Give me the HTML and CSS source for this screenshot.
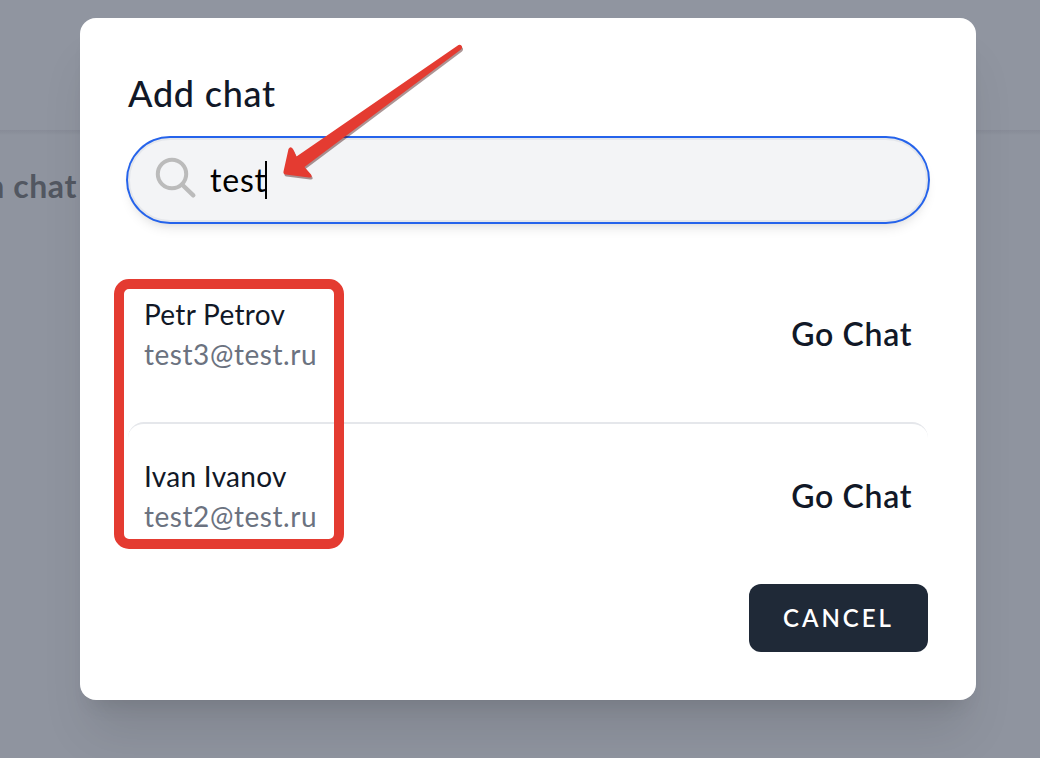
FILE: index.html
```html
<!DOCTYPE html>
<html lang="en">
<head>
<meta charset="utf-8">
<title>Add chat</title>
<link rel="stylesheet" href="styles.css">
</head>
<body>
<div class="page">
  <header class="page-header"></header>
  <main class="page-main"><span class="page-hint">n chat</span></main>
</div>
<div class="overlay">
  <section class="modal">
    <h1 class="title">Add chat</h1>
    <div class="search">
      <svg class="search-icon" viewBox="0 0 42 42" fill="none" stroke="#bbbbbb" stroke-width="4" stroke-linecap="round">
        <circle cx="18" cy="15" r="14.2"/>
        <path d="M28 25.500L39.300 36.300" stroke-width="4.400"/>
      </svg>
      <span class="query">test</span><span class="caret"></span>
    </div>
    <ul class="results">
      <li class="row first">
        <div class="person"><span class="name">Petr Petrov</span><span class="email">test3@test.ru</span></div>
        <span class="go">Go Chat</span>
      </li>
      <li class="row">
        <div class="person"><span class="name">Ivan Ivanov</span><span class="email">test2@test.ru</span></div>
        <span class="go">Go Chat</span>
      </li>
    </ul>
    <div class="actions"><button class="cancel">CANCEL</button></div>
  </section>
</div>
<div class="highlight"></div>
<svg class="arrow" viewBox="0 0 1040 758">
  <path d="M458.5 45Q461 44 462 46.500Q462.500 48 461 49.500L304.500 167L311 174.500Q313 178 309 177.500L285.500 174.500Q283 174 283.500 171.500L288.500 149Q290.500 145.500 293 149L296.500 156.500Z" fill="#e43b31"/>
</svg>
</body>
</html>
```

FILE: styles.css
```css
* { box-sizing: border-box; }
body {
  margin: 0;
  width: 1040px;
  height: 758px;
  overflow: hidden;
  font-family: Lato, "Open Sans", sans-serif;
  color: #111827;
  background: #8f949f;
}
.page-header { height: 130px; background: #9095a0; }
.page-main {
  height: 628px;
  background: linear-gradient(#888c98, #8b909b 3px, #8f949f 5px);
  padding-top: 36px;
}
.page-hint {
  display: flex;
  justify-content: flex-end;
  width: 77px;
  white-space: nowrap;
  font-size: 32px;
  line-height: 40px;
  font-weight: 700;
  letter-spacing: 0.6px;
  color: #525761;
}
.overlay {
  position: absolute;
  inset: 0;
  padding: 18px 64px 58px 80px;
}
.modal {
  width: 896px;
  height: 682px;
  padding: 48px;
  border-radius: 16px;
  background: #fff;
  box-shadow: 0 40px 50px -10px rgba(0,0,0,.1), 0 16px 20px -12px rgba(0,0,0,.1);
}
.title {
  margin: 0 0 18px;
  height: 54px;
  font-size: 36px;
  line-height: 54px;
  font-weight: 500;
  letter-spacing: 0.75px;
}
.search {
  height: 84px;
  display: flex;
  align-items: center;
  padding-left: 24px;
  border: 2px solid #e5e7eb;
  border-radius: 42px;
  background: #f3f4f6;
  box-shadow: 0 0 0 2px #2563eb, 0 8px 12px -2px rgba(0,0,0,.1), 0 4px 8px -4px rgba(0,0,0,.1);
}
.search-icon { width: 42px; height: 42px; margin-right: 14px; overflow: visible; }
.query { font-size: 32px; line-height: 48px; letter-spacing: 0.8px; color: #000; }
.caret { width: 2px; height: 38px; background: #000; margin-left: -1.5px; }
.results { list-style: none; margin: 38px 0 0; padding: 0; }
.row {
  height: 162px;
  display: flex;
  justify-content: space-between;
  align-items: flex-start;
  padding: 32px 16px 48px;
  border-top: 2px solid #e5e7eb;
  border-radius: 16px;
}
.row.first { border-top-color: transparent; }
.person { display: flex; flex-direction: column; align-items: flex-start; }
.name, .email { font-size: 28px; line-height: 40px; }
.name { letter-spacing: 0.3px; }
.email { color: #6b7280; letter-spacing: 0.55px; }
.go { font-size: 32px; line-height: 80px; font-weight: 600; letter-spacing: 0.65px; }
.actions { display: flex; justify-content: flex-end; }
.cancel {
  width: 179px;
  height: 68px;
  padding: 0;
  border: 0;
  border-radius: 12px;
  background: #1f2937;
  color: #fff;
  font: 600 24px/32px Lato, sans-serif;
  letter-spacing: 3px;
}
.highlight {
  position: absolute;
  left: 114px;
  top: 279px;
  width: 230px;
  height: 270px;
  border: 10px solid #e43b31;
  border-radius: 15px;
}
.arrow {
  position: absolute;
  left: 0;
  top: 0;
  width: 1040px;
  height: 758px;
  filter: drop-shadow(1px 2px 0.5px rgba(70,20,20,.45));
}
```
